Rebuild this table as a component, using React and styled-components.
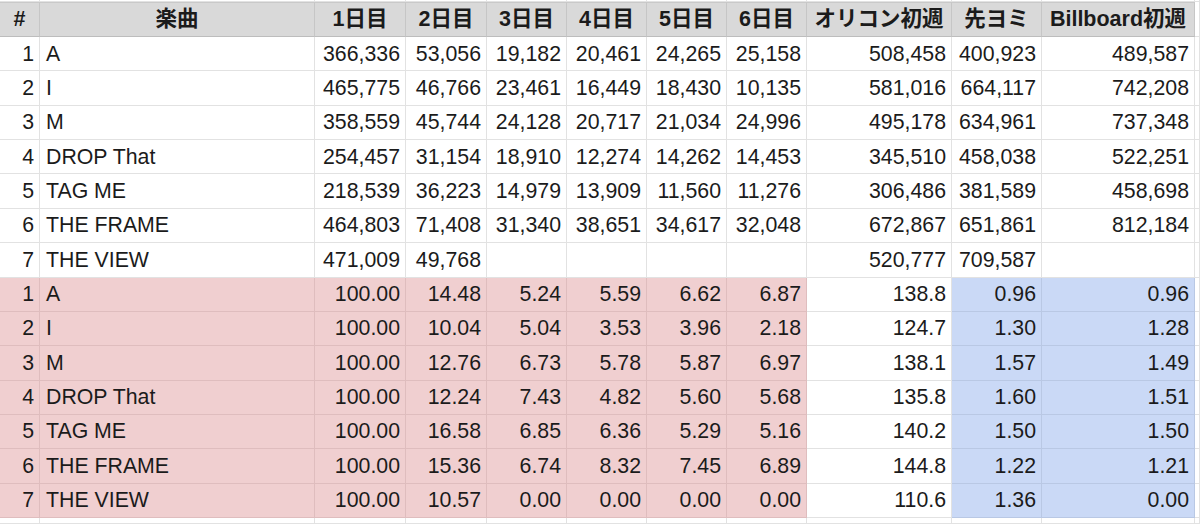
import styled, { createGlobalStyle } from 'styled-components'

const GlobalStyle = createGlobalStyle`
  html, body {
    margin: 0;
    padding: 0;
    background: #ffffff;
  }
  body {
    font-family: 'Liberation Sans', Arial, 'Noto Sans CJK JP', sans-serif;
    color: #1b1b1b;
  }
`

const COLUMNS = [40, 275, 91, 81, 80, 80, 80, 80, 145, 90, 153]

const HEADERS = ['#', '楽曲', '1日目', '2日目', '3日目', '4日目', '5日目', '6日目', 'オリコン初週', '先ヨミ', 'Billboard初週']

const SALES = [
  ['1', 'A', '366,336', '53,056', '19,182', '20,461', '24,265', '25,158', '508,458', '400,923', '489,587'],
  ['2', 'I', '465,775', '46,766', '23,461', '16,449', '18,430', '10,135', '581,016', '664,117', '742,208'],
  ['3', 'M', '358,559', '45,744', '24,128', '20,717', '21,034', '24,996', '495,178', '634,961', '737,348'],
  ['4', 'DROP That', '254,457', '31,154', '18,910', '12,274', '14,262', '14,453', '345,510', '458,038', '522,251'],
  ['5', 'TAG ME', '218,539', '36,223', '14,979', '13,909', '11,560', '11,276', '306,486', '381,589', '458,698'],
  ['6', 'THE FRAME', '464,803', '71,408', '31,340', '38,651', '34,617', '32,048', '672,867', '651,861', '812,184'],
  ['7', 'THE VIEW', '471,009', '49,768', '', '', '', '', '520,777', '709,587', ''],
]

const RATIOS = [
  ['1', 'A', '100.00', '14.48', '5.24', '5.59', '6.62', '6.87', '138.8', '0.96', '0.96'],
  ['2', 'I', '100.00', '10.04', '5.04', '3.53', '3.96', '2.18', '124.7', '1.30', '1.28'],
  ['3', 'M', '100.00', '12.76', '6.73', '5.78', '5.87', '6.97', '138.1', '1.57', '1.49'],
  ['4', 'DROP That', '100.00', '12.24', '7.43', '4.82', '5.60', '5.68', '135.8', '1.60', '1.51'],
  ['5', 'TAG ME', '100.00', '16.58', '6.85', '6.36', '5.29', '5.16', '140.2', '1.50', '1.50'],
  ['6', 'THE FRAME', '100.00', '15.36', '6.74', '8.32', '7.45', '6.89', '144.8', '1.22', '1.21'],
  ['7', 'THE VIEW', '100.00', '10.57', '0.00', '0.00', '0.00', '0.00', '110.6', '1.36', '0.00'],
]

const TONES = {
  plain: { bg: '#ffffff', line: '#e2e2e2' },
  head: { bg: '#d9d9d9', line: '#c6c6c6' },
  pink: { bg: '#f0cfd0', line: '#dfbdbe' },
  blue: { bg: '#cad9f6', line: '#b9c8e4' },
}

const Sheet = styled.div`
  display: grid;
  grid-template-columns: ${COLUMNS.map((w) => `${w}px`).join(' ')} 1fr;
  grid-template-rows: 2px 35px repeat(14, 34.36px) 1fr;
  width: 1200px;
  height: 524px;
  overflow: hidden;
  font-size: 21.3px;
`

const Cell = styled.div`
  box-sizing: border-box;
  display: flex;
  align-items: center;
  justify-content: ${(p) => (p.$align === 'left' ? 'flex-start' : p.$align === 'center' ? 'center' : 'flex-end')};
  padding-left: 6px;
  padding-right: ${(p) => (p.$align === 'right' ? '5px' : '6px')};
  padding-top: 1px;
  background: ${(p) => TONES[p.$tone].bg};
  border-right: 1px solid ${(p) => TONES[p.$tone].line};
  border-bottom: 1px solid ${(p) => TONES[p.$tone].line};
  white-space: nowrap;
  overflow: hidden;
  line-height: 1;
`

const HeadCell = styled(Cell)`
  font-weight: bold;
  font-size: 21.5px;
  padding-left: 2px;
  padding-right: 2px;
  border-top: 1px solid #c9c9c9;
  border-bottom: 1px solid #bdbdbd;
`

const Filler = styled(Cell)`
  padding: 0;
`

const alignFor = (i) => (i === 1 ? 'left' : 'right')

const ratioTone = (i) => (i <= 7 ? 'pink' : i === 8 ? 'plain' : 'blue')

const App = () => {
  const cols = COLUMNS.length + 1

  return (
    <>
      <GlobalStyle />
      <Sheet>
        {Array.from({ length: cols }).map((_, i) => (
          <Filler key={`top-${i}`} $tone="plain" />
        ))}

        {HEADERS.map((h, i) => (
          <HeadCell key={`h-${i}`} $tone="head" $align="center">
            {h}
          </HeadCell>
        ))}
        <Filler $tone="plain" />

        {SALES.map((row, r) =>
          [
            ...row.map((v, i) => (
              <Cell key={`s-${r}-${i}`} $tone="plain" $align={alignFor(i)}>
                {v}
              </Cell>
            )),
            <Filler key={`s-${r}-end`} $tone="plain" />,
          ]
        )}

        {RATIOS.map((row, r) =>
          [
            ...row.map((v, i) => (
              <Cell key={`r-${r}-${i}`} $tone={ratioTone(i)} $align={alignFor(i)}>
                {v}
              </Cell>
            )),
            <Filler key={`r-${r}-end`} $tone="plain" />,
          ]
        )}

        {Array.from({ length: cols }).map((_, i) => (
          <Filler key={`bottom-${i}`} $tone="plain" />
        ))}
      </Sheet>
    </>
  )
}

export default App
